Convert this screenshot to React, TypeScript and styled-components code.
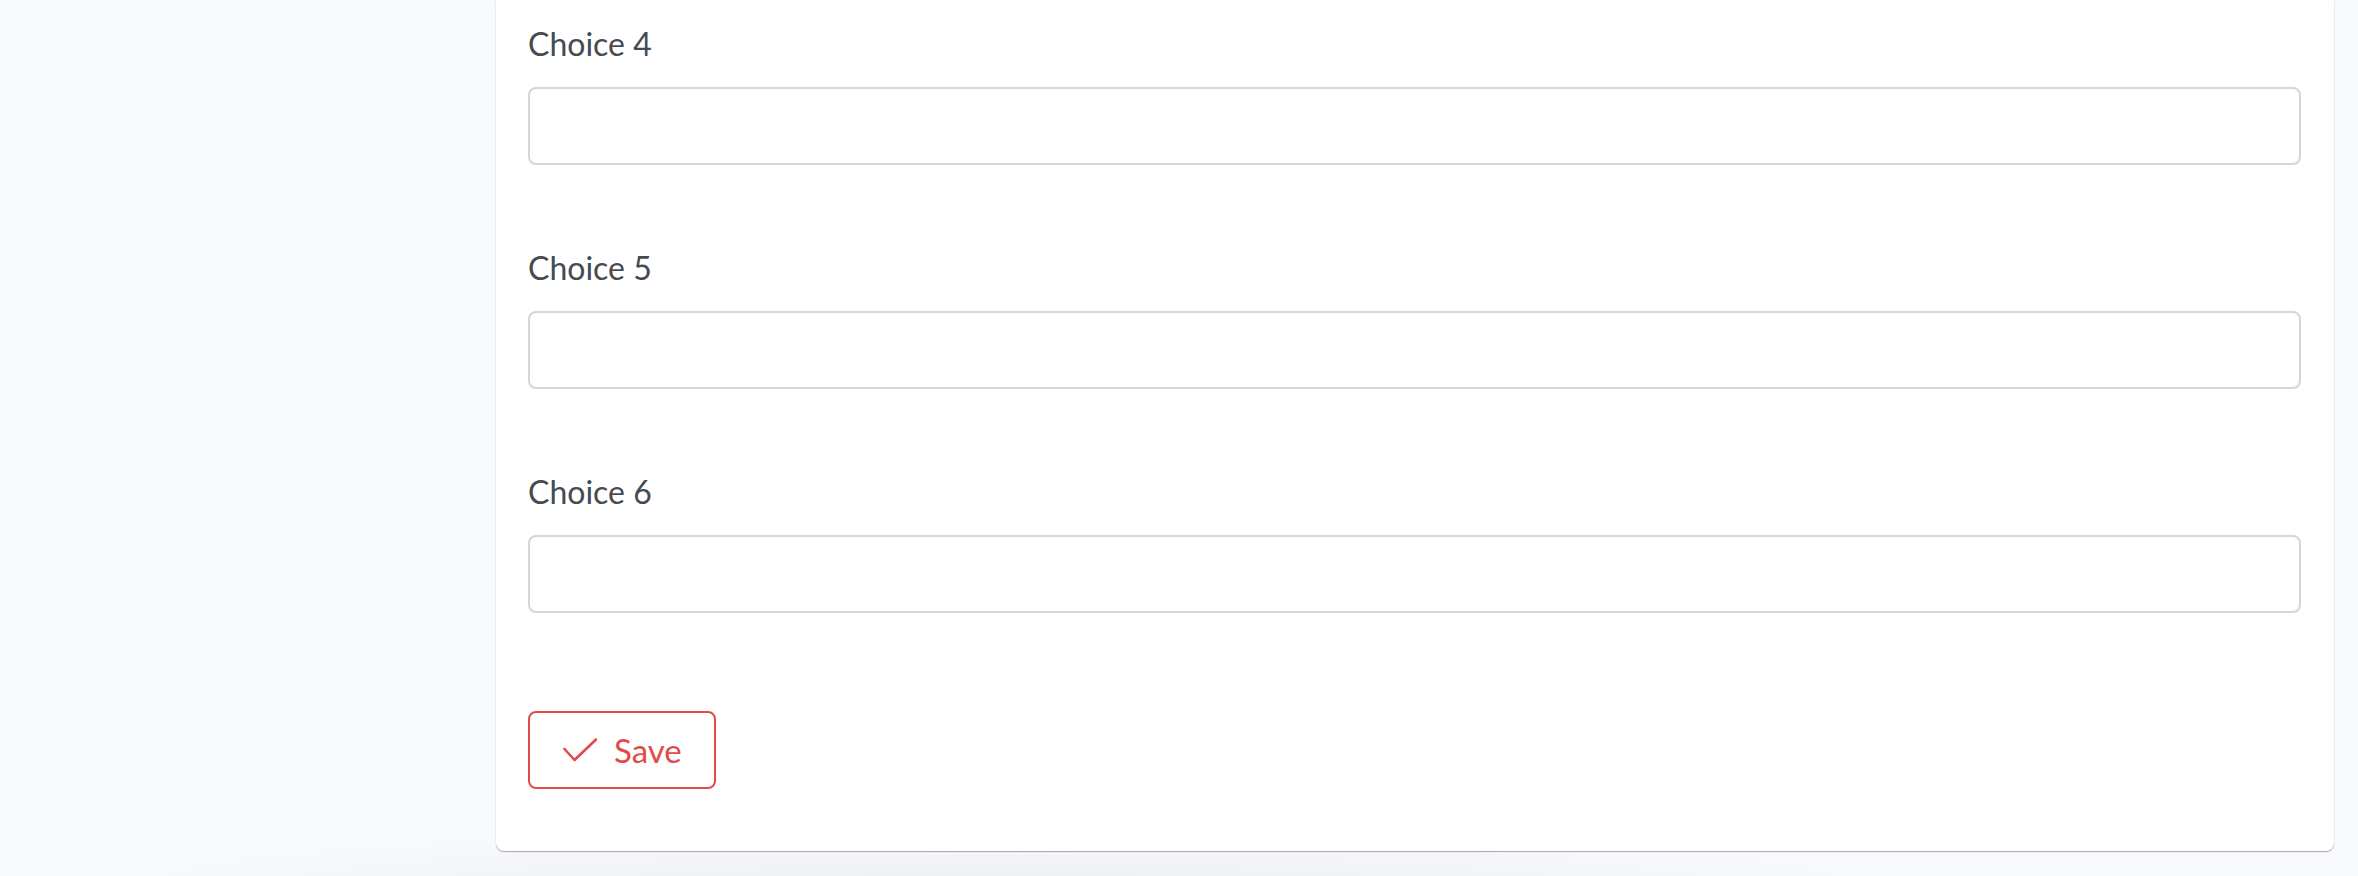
import React from 'react';
import styled, { createGlobalStyle } from 'styled-components';

const GlobalStyle = createGlobalStyle`
  html, body {
    margin: 0;
    padding: 0;
    background: #f7f9fc;
  }
  body {
    font-family: Lato, "Open Sans", sans-serif;
  }
`;

const Page = styled.div`
  display: flex;
  justify-content: flex-end;
  height: 876px;
  padding-right: 24px;
  box-sizing: border-box;
  overflow: hidden;
  background:
    radial-gradient(ellipse 900px 60px at 1000px 890px, rgba(0, 0, 0, 0.045), rgba(0, 0, 0, 0) 100%),
    #f7f9fc;
`;

const Card = styled.section`
  width: 1838px;
  height: 851px;
  box-sizing: border-box;
  background: #fff;
  border-radius: 0 0 8px 8px;
  padding: 20px 33px 0 32px;
  box-shadow: 0 1px 1px rgba(0, 0, 0, 0.32), 0 0 2px rgba(0, 0, 0, 0.08);
  display: flex;
  flex-direction: column;
`;

const Field = styled.div`
  display: flex;
  flex-direction: column;
  margin-bottom: 79px;

  &:last-of-type {
    margin-bottom: 98px;
  }
`;

const Label = styled.label`
  font-size: 32px;
  line-height: 48px;
  color: #454b53;
  margin-bottom: 19px;
`;

const Input = styled.input`
  height: 78px;
  box-sizing: border-box;
  border: 2px solid #d3d6db;
  border-radius: 8px;
  background: #fff;
  font: inherit;
  font-size: 32px;
  padding: 0 20px;
  outline: none;
`;

const SaveButton = styled.button`
  align-self: flex-start;
  display: flex;
  align-items: center;
  gap: 17px;
  height: 78px;
  padding: 0 32px 0 33px;
  box-sizing: border-box;
  border: 2px solid #e24a4a;
  border-radius: 8px;
  background: #fff;
  color: #e24a4a;
  font-family: Lato, "Open Sans", sans-serif;
  font-size: 33px;
  cursor: pointer;
`;

const CheckIcon = () => (
  <svg width="34" height="24" viewBox="0 0 34 24" fill="none">
    <polyline
      points="1.5,11 11.5,22 33,1.5"
      stroke="#e24a4a"
      strokeWidth="2.6"
      strokeLinecap="round"
      strokeLinejoin="round"
    />
  </svg>
);

const choices = ['Choice 4', 'Choice 5', 'Choice 6'];

const App = () => {
  return (
    <>
      <GlobalStyle />
      <Page>
        <Card>
          {choices.map((choice) => (
            <Field key={choice}>
              <Label>{choice}</Label>
              <Input type="text" />
            </Field>
          ))}
          <SaveButton type="button">
            <CheckIcon />
            Save
          </SaveButton>
        </Card>
      </Page>
    </>
  );
};

export default App;
